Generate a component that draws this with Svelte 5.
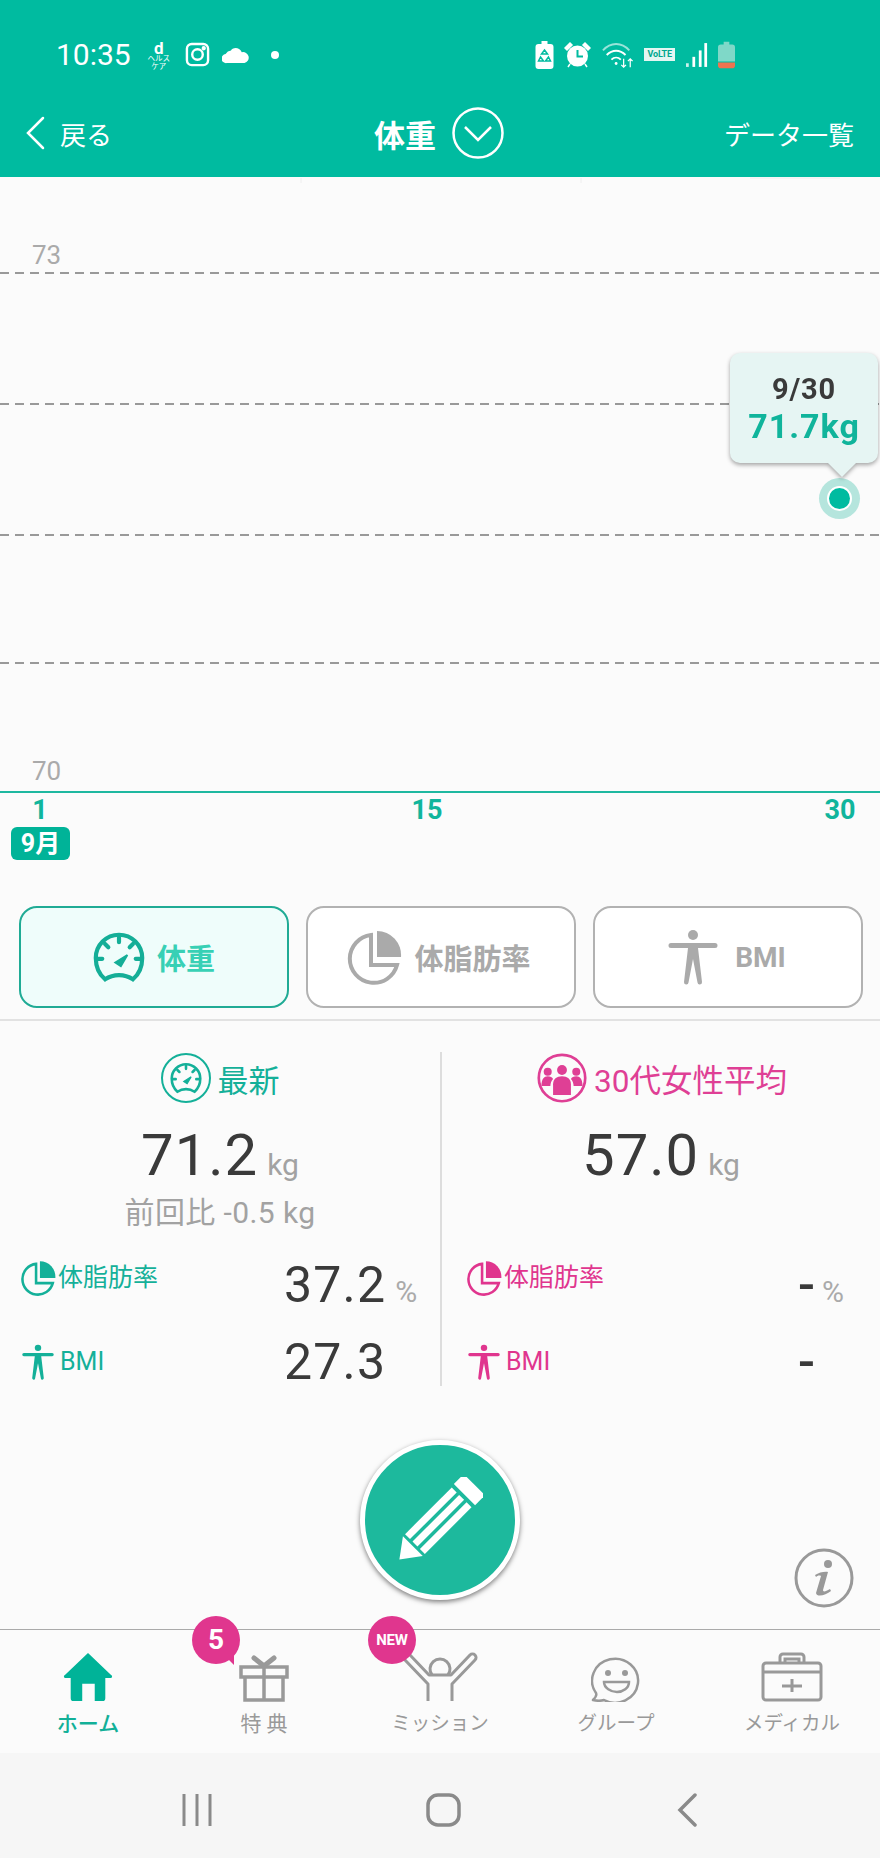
<script>
  const gridLines = [273, 404, 535, 663];
  const tabs = [
    { label: 'ホーム', icon: 'home', active: true },
    { label: '特 典', icon: 'gift' },
    { label: 'ミッション', icon: 'mission' },
    { label: 'グループ', icon: 'group' },
    { label: 'メディカル', icon: 'medical' }
  ];
</script>

{#snippet gauge(size)}
  <svg width={size} height={size} viewBox="0 0 56 56" fill="none" stroke="currentColor" stroke-width="4.500" stroke-linecap="round">
    <path d="M13 52C6 46 3 37 3 29a25 25 0 0 1 50 0c0 8-3 17-10 23-9-6-21-6-30 0z" />
    <path d="M28 7v5M13 14l3.500 3.500M43 14l-3.500 3.500M5 30h5M46 30h5" />
    <path d="M24 34l13-8-7 12z" fill="currentColor" stroke-width="2" />
  </svg>
{/snippet}

{#snippet pie(size)}
  <svg width={size} height={size} viewBox="0 0 56 56" fill="none" stroke="currentColor" stroke-width="4">
    <path d="M25 6A24 24 0 1 0 51 36H25z" />
    <path d="M31 2a24 24 0 0 1 24 26H31z" fill="currentColor" stroke="none" />
  </svg>
{/snippet}

{#snippet person(size)}
  <svg width={size} height={size} viewBox="0 0 56 56" fill="currentColor">
    <circle cx="28" cy="6" r="5" />
    <path d="M6 14h44a2.500 2.500 0 0 1 0 5H33l4 34a2.200 2.200 0 0 1-4.500.5L28 30l-4.500 23.500a2.200 2.200 0 0 1-4.500-.5l4-34H6a2.500 2.500 0 0 1 0-5z" />
  </svg>
{/snippet}

{#snippet people(size)}
  <svg width={size} height={size} viewBox="0 0 56 56">
    <circle cx="28" cy="28" r="26" fill="none" stroke="currentColor" stroke-width="3" />
    <g fill="currentColor">
      <circle cx="12" cy="21" r="4.500" />
      <circle cx="44" cy="21" r="4.500" />
      <circle cx="28" cy="19" r="5.500" />
      <path d="M5 37c0-8 3-11 7-11 3 0 5 1 6 3-2 2-3 5-3 8zM51 37c0-8-3-11-7-11-3 0-5 1-6 3 2 2 3 5 3 8z" />
      <path d="M18 47V35c0-6 4-9 10-9s10 3 10 9v12z" />
    </g>
  </svg>
{/snippet}

{#snippet tabIcon(name)}
  {#if name === 'home'}
    <svg width="50" height="50" viewBox="0 0 50 52" fill="#00b398">
      <path d="M25 1L49 24a1.500 1.500 0 0 1-1 3h-5v21a3 3 0 0 1-3 3h-8V33H19v18h-9a3 3 0 0 1-3-3V27H2a1.500 1.500 0 0 1-1-3z" />
    </svg>
  {:else if name === 'gift'}
    <svg width="50" height="48" viewBox="0 0 50 48" fill="none" stroke="#999" stroke-width="3.500">
      <path d="M2 13h46v10H2zM6 23v23h38V23M25 13v33" stroke-width="3.500" />
      <path d="M25 12L15 4M25 12L35 4" stroke-width="5" stroke-linecap="round" />
    </svg>
  {:else if name === 'mission'}
    <svg width="76" height="50" viewBox="0 0 76 50" fill="none" stroke="#999" stroke-width="3" stroke-linejoin="round">
      <path d="M30 23a10 10 0 1 1 16 0" />
      <path d="M26 49V32L3 8a3 3 0 0 1 5-5L27 23h22L68 3a3 3 0 0 1 5 5L50 32v17" />
    </svg>
  {:else if name === 'group'}
    <svg width="50" height="47" viewBox="0 0 50 47" fill="none" stroke="#999" stroke-width="2.500">
      <path d="M2 45c3-3 4-5 3-7a23 22 0 1 1 8 7c-3 1-7 1-11 0z" stroke-linejoin="round" />
      <circle cx="17" cy="18" r="3" fill="#999" stroke="none" />
      <circle cx="34" cy="18" r="3" fill="#999" stroke="none" />
      <path d="M13 27h25c0 6-6 10-12 10s-13-4-13-10z" />
    </svg>
  {:else}
    <svg width="62" height="50" viewBox="0 0 62 50" fill="none" stroke="#999" stroke-width="3">
      <rect x="2" y="11" width="58" height="37" rx="3" />
      <path d="M2 20h58M19 11V5a3 3 0 0 1 3-3h18a3 3 0 0 1 3 3v6M24 11V7h14v4" />
      <path d="M31 27v13M21 34h20" />
    </svg>
  {/if}
{/snippet}

<div class="page">
  <header class="top">
    <div class="status">
      <div class="status-left">
        <span class="time">10:35</span>
        <span class="dcare"><b>d</b><i>ヘルス</i><i>ケア</i></span>
        <svg class="insta" width="25" height="25" viewBox="0 0 26 26" fill="none" stroke="#fff" stroke-width="2.500">
          <rect x="2" y="2" width="22" height="22" rx="5" />
          <circle cx="13" cy="13" r="5.500" />
          <circle cx="19.500" cy="6.500" r="1" fill="#fff" />
        </svg>
        <svg class="cloud" width="27" height="18" viewBox="0 0 30 18" fill="#fff">
          <path d="M5 18a5 5 0 0 1-1-10 8 8 0 0 1 6-4c1-3 9-5 12 2a6 6 0 0 1 3 12z" />
        </svg>
        <span class="dot"></span>
      </div>
      <div class="status-right">
        <svg width="19" height="28" viewBox="0 0 18 28" fill="#fff">
          <path d="M6 0h6v3h3a3 3 0 0 1 3 3v19a3 3 0 0 1-3 3H3a3 3 0 0 1-3-3V6a3 3 0 0 1 3-3h3z" />
          <path d="M9 9l3 4H6zM5 16l-2 4h5zM13 16l2 4h-5z" fill="none" stroke="#00bba0" stroke-width="1.500" />
        </svg>
        <svg width="27" height="27" viewBox="0 0 27 27" fill="#fff">
          <circle cx="13.500" cy="15" r="10.500" />
          <path d="M1 7l5-5 2 2-5 5zM26 7l-5-5-2 2 5 5zM6 23l-2 3M21 23l2 3" stroke="#fff" stroke-width="1.500" />
          <path d="M13.500 9v6.500H19" fill="none" stroke="#00bba0" stroke-width="2" />
        </svg>
        <svg width="32" height="28" viewBox="0 0 34 28" fill="none" stroke="#fff" stroke-width="2">
          <path d="M1 9c8-9 20-9 28 0" opacity=".6" />
          <path d="M5 14c6-6 14-6 20 0M10 19c3-3 7-3 10 0" />
          <circle cx="15" cy="23" r="1.500" fill="#fff" stroke="none" />
          <path d="M23 18v9M20.500 24.500l2.500 2.500 2.500-2.500M30 27v-9M27.500 20.500l2.500-2.500 2.500 2.500" stroke-width="1.300" />
        </svg>
        <span class="volte">VoLTE</span>
        <svg width="22" height="28" viewBox="0 0 24 28" fill="#fff">
          <rect x="0" y="23" width="3" height="4" opacity=".8" />
          <rect x="7" y="16" width="3" height="11" />
          <rect x="14" y="9" width="3" height="18" />
          <rect x="20" y="1" width="3" height="26" />
        </svg>
        <svg width="17" height="28" viewBox="0 0 18 28">
          <path d="M6 0h6v3h3a3 3 0 0 1 3 3v15H0V6a3 3 0 0 1 3-3h3z" fill="#7fd8c8" />
          <path d="M0 22h18v3a3 3 0 0 1-3 3H3a3 3 0 0 1-3-3z" fill="#ee7350" />
        </svg>
      </div>
    </div>
    <nav class="bar">
      <div class="back">
        <svg width="22" height="34" viewBox="0 0 22 34" fill="none" stroke="#fff" stroke-width="2.500" stroke-linecap="round">
          <path d="M19 2L4 17l15 15" />
        </svg>
        <span>戻る</span>
      </div>
      <div class="title">
        <span>体重</span>
        <svg width="52" height="52" viewBox="0 0 52 52" fill="none" stroke="#fff" stroke-width="2.500">
          <circle cx="26" cy="26" r="24.500" />
          <path d="M13 20l13 13 13-13" />
        </svg>
      </div>
      <span class="list-link">データ一覧</span>
    </nav>
  </header>

  <section class="chart">
    <svg class="chart-lines" width="880" height="680" viewBox="0 177 880 680">
      <path d="M301 178v5M581 178v5M750 178h90" stroke="#eee" stroke-width="1" />
      {#each gridLines as y}
        <line x1="0" x2="880" y1={y} y2={y} stroke="#999" stroke-width="2" stroke-dasharray="9 6" />
      {/each}
      <line x1="0" x2="880" y1="792" y2="792" stroke="#1eb8a0" stroke-width="2" />
      <circle cx="839.500" cy="498.500" r="20.500" fill="#b5e5dd" />
      <circle cx="839.500" cy="498.500" r="12.500" fill="#fff" />
      <circle cx="839.500" cy="498.500" r="10.500" fill="#00bba0" />
    </svg>
    <span class="axis-num y73">73</span>
    <span class="axis-num y70">70</span>
    <span class="day d1">1</span>
    <span class="day d15">15</span>
    <span class="day d30">30</span>
    <span class="month">9月</span>
    <div class="tip">
      <span class="tip-date">9/30</span>
      <span class="tip-value">71.7kg</span>
    </div>
  </section>

  <section class="modes">
    <button class="mode active">
      {@render gauge(52)}
      <span>体重</span>
    </button>
    <button class="mode shift">
      {@render pie(56)}
      <span>体脂肪率</span>
    </button>
    <button class="mode shift">
      {@render person(56)}
      <span class="latin">BMI</span>
    </button>
  </section>

  <section class="stats">
    <div class="col green">
      <h2>
        <span class="ring">{@render gauge(32)}</span>
        最新
      </h2>
      <p class="main"><strong>71.2</strong><small>kg</small></p>
      <p class="diff">前回比 -0.5 kg</p>
      <div class="metric m1">
        <span class="metric-label">{@render pie(36)}体脂肪率</span>
        <span class="metric-value"><strong>37.2</strong><small>%</small></span>
      </div>
      <div class="metric">
        <span class="metric-label">{@render person(36)}<span class="latin-l">BMI</span></span>
        <span class="metric-value"><strong>27.3</strong></span>
      </div>
    </div>
    <div class="col pink">
      <h2>
        {@render people(50)}
        30代女性平均
      </h2>
      <p class="main"><strong>57.0</strong><small>kg</small></p>
      <p class="diff"></p>
      <div class="metric m1">
        <span class="metric-label">{@render pie(36)}体脂肪率</span>
        <span class="metric-value empty"><strong>-</strong><small>%</small></span>
      </div>
      <div class="metric">
        <span class="metric-label">{@render person(36)}<span class="latin-l">BMI</span></span>
        <span class="metric-value empty"><strong>-</strong></span>
      </div>
    </div>
  </section>

  <section class="actions">
    <button class="fab" aria-label="記録">
      <svg width="86" height="86" viewBox="0 0 86 86" fill="#fff">
        <g transform="translate(42 43) rotate(45)">
          <path d="M-14 37h28L0 56z" />
          <rect x="-14" y="-32" width="7" height="66" />
          <rect x="-3.500" y="-32" width="7" height="66" />
          <rect x="7" y="-32" width="7" height="66" />
          <rect x="-15" y="-50" width="30" height="14" />
        </g>
      </svg>
    </button>
    <svg class="info" width="60" height="60" viewBox="0 0 60 60">
      <circle cx="30" cy="30" r="28" fill="none" stroke="#999" stroke-width="3" />
      <circle cx="34" cy="16" r="4" fill="#999" />
      <path d="M21 27c4-3 11-4 13-3l-5 18c0 2 2 2 7-1l1 2c-5 4-14 7-15 2l5-17c-2-1-4 0-5 1z" fill="#999" />
    </svg>
  </section>

  <footer class="tabs">
    {#each tabs as tab}
      <div class="tab" class:on={tab.active} class:wide={tab.icon === 'gift'}>
        <div class="tab-icon">{@render tabIcon(tab.icon)}</div>
        <span>{tab.label}</span>
        {#if tab.icon === 'gift'}
          <span class="badge num">5</span>
        {:else if tab.icon === 'mission'}
          <span class="badge new">NEW</span>
        {/if}
      </div>
    {/each}
  </footer>

  <div class="system">
    <svg width="32" height="32" viewBox="0 0 32 32" stroke="#8a8a8a" stroke-width="3">
      <path d="M3 0v32M16 0v32M29 0v32" />
    </svg>
    <svg class="home-key" width="35" height="34" viewBox="0 0 35 34" fill="none" stroke="#8a8a8a" stroke-width="3.500">
      <rect x="2" y="2" width="31" height="30" rx="10" />
    </svg>
    <svg class="back-key" width="22" height="34" viewBox="0 0 22 34" fill="none" stroke="#8a8a8a" stroke-width="3.500" stroke-linecap="round">
      <path d="M19 2L4 17l15 15" />
    </svg>
  </div>
</div>

<style>
  :global(body) {
    margin: 0;
    background: #fbfbfb;
  }

  .page {
    width: 880px;
    height: 1858px;
    display: flex;
    flex-direction: column;
    overflow: hidden;
    background: #fbfbfb;
    color: #3a3a3a;
    font-family: Roboto, "Noto Sans CJK JP", sans-serif;
  }

  .top {
    height: 177px;
    flex: none;
    background: #00bba0;
    color: #fff;
  }

  .status {
    height: 97px;
    padding: 12px 145px 0 56px;
    display: flex;
    align-items: center;
    justify-content: space-between;
    box-sizing: border-box;
  }

  .status-left,
  .status-right {
    display: flex;
    align-items: center;
  }

  .status-right {
    gap: 10.400px;
  }

  .time {
    font-size: 30px;
    line-height: 34px;
  }

  .dcare {
    display: flex;
    flex-direction: column;
    align-items: center;
    width: 22px;
    margin: 2px 0 0 17px;
    font-size: 7.500px;
    line-height: 8px;
    white-space: nowrap;
  }

  .dcare b {
    font-size: 17px;
    line-height: 14px;
  }

  .dcare i {
    font-style: normal;
  }

  .insta {
    margin-left: 15px;
  }

  .cloud {
    margin-left: 12px;
  }

  .dot {
    width: 8px;
    height: 8px;
    margin-left: 22px;
    border-radius: 50%;
    background: #fff;
  }

  .volte {
    width: 31px;
    box-sizing: border-box;
    background: #e4f6f2;
    color: #00a78e;
    font-size: 9px;
    font-weight: 700;
    line-height: 13px;
    text-align: center;
    letter-spacing: -0.2px;
  }

  .bar {
    height: 80px;
    padding: 0 26px 8px 24px;
    box-sizing: border-box;
    display: grid;
    grid-template-columns: 1fr auto 1fr;
    align-items: center;
  }

  .back {
    display: flex;
    align-items: center;
    gap: 14px;
    font-size: 26px;
  }

  .title {
    display: flex;
    align-items: center;
    gap: 16px;
    font-size: 31px;
    font-weight: 700;
  }

  .list-link {
    justify-self: end;
    font-size: 26px;
  }

  .chart {
    position: relative;
    height: 680px;
    flex: none;
  }

  .chart-lines {
    position: absolute;
    inset: 0;
  }

  .axis-num {
    position: absolute;
    left: 32px;
    font-size: 26px;
    line-height: 30px;
    color: #aaa;
  }

  .y73 {
    top: 63px;
  }

  .y70 {
    top: 579px;
  }

  .day {
    position: absolute;
    top: 619px;
    width: 60px;
    text-align: center;
    font-size: 27px;
    line-height: 28px;
    font-weight: 700;
    color: #11b59c;
  }

  .d1 {
    left: 10px;
  }

  .d15 {
    left: 397px;
  }

  .d30 {
    left: 810px;
  }

  .month {
    position: absolute;
    top: 650px;
    left: 11px;
    width: 59px;
    height: 33px;
    border-radius: 6px;
    background: #00b398;
    color: #fff;
    font-size: 25px;
    line-height: 33px;
    font-weight: 700;
    text-align: center;
  }

  .tip {
    position: absolute;
    left: 730px;
    top: 176px;
    width: 148px;
    height: 110px;
    display: flex;
    flex-direction: column;
    align-items: center;
    padding-top: 20px;
    box-sizing: border-box;
    border-radius: 10px;
    background: #e6f5f3;
    filter: drop-shadow(0 2px 2px rgba(0, 0, 0, 0.35));
  }

  .tip::after {
    content: "";
    position: absolute;
    left: 98px;
    bottom: -14px;
    width: 28px;
    height: 14px;
    clip-path: polygon(0 0, 100% 0, 50% 100%);
    background: #e6f5f3;
  }

  .tip-date {
    font-size: 29px;
    line-height: 33px;
    font-weight: 700;
    letter-spacing: 0.8px;
  }

  .tip-value {
    font-size: 34px;
    line-height: 41px;
    font-weight: 700;
    letter-spacing: 1px;
    color: #10b49b;
  }

  .modes {
    flex: none;
    height: 164px;
    padding: 49px 17px 11px 19px;
    box-sizing: border-box;
    display: grid;
    grid-template-columns: repeat(3, 270px);
    gap: 17px;
    border-bottom: 2px solid #e2e2e2;
  }

  .mode {
    display: flex;
    align-items: center;
    justify-content: center;
    gap: 12px;
    border: 2px solid #b2b2b2;
    border-radius: 18px;
    background: #fff;
    color: #aaa;
    font: inherit;
    font-size: 29px;
    font-weight: 700;
    padding: 0;
  }

  .mode.shift {
    padding-right: 5px;
  }

  .mode.active {
    border-color: #20ab95;
    background: #effdfb;
    color: #14ae97;
  }

  .mode.active span {
    color: #38d0b5;
  }

  .mode .latin {
    margin-left: 2px;
    font-size: 28px;
  }

  .stats {
    flex: none;
    height: 387px;
    padding-top: 31px;
    box-sizing: border-box;
    display: grid;
    grid-template-columns: 442px 438px;
  }

  .col {
    height: 334px;
    padding: 0 20px;
    box-sizing: border-box;
  }

  .col.green {
    border-right: 2px solid #ddd;
    --accent: #14b099;
  }

  .col.pink {
    padding: 0 36px 0 24px;
    --accent: #e0358e;
  }

  h2 {
    height: 52px;
    margin: 0;
    display: flex;
    align-items: center;
    justify-content: center;
    gap: 7px;
    font-size: 31px;
    font-weight: 400;
    color: var(--accent);
  }

  .col.pink h2 {
    font-size: 31.500px;
    color: #df3f95;
    margin-left: 14px;
  }

  .ring {
    width: 50px;
    height: 50px;
    display: grid;
    place-items: center;
    border: 2.500px solid var(--accent);
    border-radius: 50%;
    box-sizing: border-box;
  }

  .main {
    margin: 16px 0 0;
    height: 70px;
    display: flex;
    align-items: baseline;
    justify-content: center;
    line-height: 70px;
  }

  .col.pink .main {
    margin-left: 12px;
  }

  .main strong {
    font-size: 58px;
    font-weight: 400;
    letter-spacing: 1px;
  }

  .main small {
    margin-left: 9px;
    font-size: 30px;
    color: #a2a2a2;
  }

  .diff {
    margin: 2px 0 0;
    height: 42px;
    line-height: 42px;
    text-align: center;
    font-size: 30px;
    letter-spacing: 0.4px;
    color: #a2a2a2;
  }

  .metric {
    display: flex;
    align-items: flex-start;
    justify-content: space-between;
    height: 76px;
  }

  .metric.m1 {
    margin-top: 22px;
    height: 80px;
  }

  .metric-label {
    display: flex;
    align-items: center;
    gap: 2px;
    margin-top: 8px;
    font-size: 25px;
    line-height: 36px;
    color: var(--accent);
    width: 230px;
  }

  .m1 .metric-label {
    margin-top: 4px;
  }

  .col.pink .metric-label {
    width: auto;
  }

  .latin-l {
    margin-left: 2px;
  }

  .metric-value {
    flex: 1;
    display: flex;
    align-items: baseline;
    margin-top: -4px;
    padding-left: 34px;
    line-height: 60px;
  }

  .m1 .metric-value {
    margin-top: -1px;
  }

  .metric-value strong {
    font-size: 50px;
    font-weight: 400;
    letter-spacing: 1.200px;
  }

  .metric-value small {
    margin-left: 9px;
    font-size: 30px;
    color: #aaa;
  }

  .metric-value.empty {
    flex: none;
    padding-left: 0;
    width: 46px;
  }

  .metric-value.empty strong {
    font-weight: 500;
    letter-spacing: 0;
  }

  .metric-value.empty small {
    margin-left: 7px;
  }

  .actions {
    flex: none;
    position: relative;
    height: 221px;
    border-bottom: 1px solid #aaa;
    box-sizing: content-box;
  }

  .fab {
    position: absolute;
    left: 360px;
    top: 32px;
    width: 160px;
    height: 160px;
    padding: 0;
    display: grid;
    place-items: center;
    border: 5px solid #fff;
    border-radius: 50%;
    background: #1db99d;
    box-sizing: border-box;
    box-shadow: 0 2px 5px rgba(0, 0, 0, 0.5);
  }

  .info {
    position: absolute;
    right: 26px;
    top: 140px;
  }

  .tabs {
    flex: none;
    height: 123px;
    display: grid;
    grid-template-columns: repeat(5, 176px);
  }

  .tab {
    position: relative;
    display: flex;
    flex-direction: column;
    align-items: center;
    color: #999;
    font-size: 19.500px;
    line-height: 30px;
  }

  .tab.on {
    color: #12b098;
    font-size: 21px;
    font-weight: 500;
  }

  .tab.wide {
    font-size: 21px;
  }

  .tab-icon {
    height: 52px;
    margin: 20px 0 7px;
    display: flex;
    align-items: flex-end;
  }

  .badge {
    position: absolute;
    top: -14px;
    left: 16px;
    width: 48px;
    height: 48px;
    display: grid;
    place-items: center;
    border-radius: 50%;
    background: #e0368e;
    color: #fff;
    font-weight: 700;
  }

  .badge.num {
    font-size: 28px;
  }

  .badge.num::after {
    content: "";
    position: absolute;
    right: 6px;
    bottom: -1px;
    width: 10px;
    height: 10px;
    clip-path: polygon(0 0, 100% 0, 100% 100%);
    background: #e0368e;
  }

  .badge.new {
    font-size: 15px;
    letter-spacing: -0.2px;
  }

  .system {
    flex: 1;
    display: flex;
    align-items: center;
    background: #f6f6f6;
    padding: 8px 0 0 181px;
  }

  .home-key {
    margin-left: 213px;
  }

  .back-key {
    margin-left: 215px;
  }
</style>
